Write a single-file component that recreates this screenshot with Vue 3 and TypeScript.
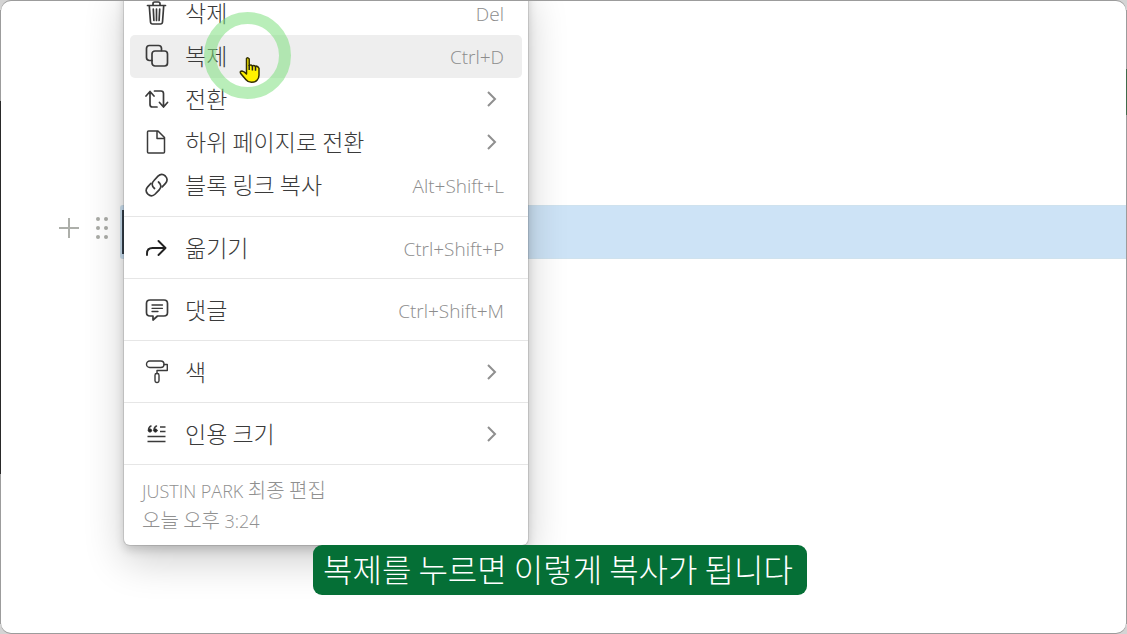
<script setup lang="ts">
type IconName = 'trash' | 'copy' | 'turn' | 'page' | 'link' | 'move' | 'comment' | 'color' | 'quote'

interface MenuItem {
  icon: IconName
  label: string
  shortcut?: string
  active?: boolean
}

const groups: MenuItem[][] = [
  [
    { icon: 'trash', label: '삭제', shortcut: 'Del' },
    { icon: 'copy', label: '복제', shortcut: 'Ctrl+D', active: true },
    { icon: 'turn', label: '전환' },
    { icon: 'page', label: '하위 페이지로 전환' },
    { icon: 'link', label: '블록 링크 복사', shortcut: 'Alt+Shift+L' },
  ],
  [{ icon: 'move', label: '옮기기', shortcut: 'Ctrl+Shift+P' }],
  [{ icon: 'comment', label: '댓글', shortcut: 'Ctrl+Shift+M' }],
  [{ icon: 'color', label: '색' }],
  [{ icon: 'quote', label: '인용 크기' }],
]
</script>

<template>
  <div class="desktop">
    <main class="window">
      <div class="block-row">
        <div class="controls">
          <button class="tool" type="button" aria-label="블록 추가">
            <svg width="22" height="22" viewBox="0 0 22 22"><path d="M11 1v20M1 11h20" stroke="#adafaa" stroke-width="2" /></svg>
          </button>
          <button class="tool" type="button" aria-label="블록 메뉴">
            <svg width="16" height="24" viewBox="0 0 16 24" fill="#a9aba6">
              <circle cx="4" cy="3" r="2" /><circle cx="12" cy="3" r="2" />
              <circle cx="4" cy="12" r="2" /><circle cx="12" cy="12" r="2" />
              <circle cx="4" cy="21" r="2" /><circle cx="12" cy="21" r="2" />
            </svg>
          </button>
        </div>
        <div class="block"></div>
      </div>

      <nav class="menu">
        <ul v-for="(group, g) in groups" :key="g" class="group">
          <li v-for="item in group" :key="item.label">
            <button class="item" :class="{ active: item.active }" type="button">
              <svg class="icon" viewBox="0 0 24 24" fill="none" stroke="#3a3a3a" stroke-width="1.7" stroke-linecap="round" stroke-linejoin="round">
                <template v-if="item.icon === 'trash'">
                  <path d="M2.5 4.5h18M8 4V2.7Q8 1 9.7 1h3.6Q15 1 15 2.7V4M4.3 5l1.2 16q.2 2 2 2h8q1.800 0 2-2L18.700 5M8.300 8l.6 11.500M11.500 8v11.500M14.700 8l-.6 11.500" />
                </template>
                <template v-else-if="item.icon === 'copy'">
                  <rect x="7" y="7" width="15.500" height="15" rx="3" />
                  <path d="M7 16.500H4.500q-3 0-3-3V4.500q0-3 3-3h9q3 0 3 3V6.500" />
                </template>
                <template v-else-if="item.icon === 'turn'">
                  <path d="M1 9l4-4.500L9 9M5 5v12.500q0 2.500 2.500 2.500H12M9.500 4H16q2.500 0 2.500 2.500V19M14.500 15.500l4 4.500 4-4.500" />
                </template>
                <template v-else-if="item.icon === 'page'">
                  <path d="M3.500 1H13l6.500 6.500V22q0 1-1 1h-15q-1 0-1-1V2q0-1 1-1zM12 1.500V8.500h7" stroke-width="1.500" />
                </template>
                <template v-else-if="item.icon === 'link'">
                  <path d="M9.500 15.500C6.500 13 6.500 10 9 7.500l4-4.300c2.500-2.500 5.300-2 7.300-.2 2.200 2.100 2.400 5 .2 7.300l-3.300 3.600" />
                  <path d="M13.500 9c3 2.500 3 5.300.7 7.800l-4 4.200c-2.500 2.500-5.300 2-7.300.2-2.200-2.100-2.400-5-.2-7.300L6 10.300" />
                </template>
                <template v-else-if="item.icon === 'move'">
                  <path d="M2 19v-1.500Q2 12 7.500 12H20M13.500 5l7 7-7 7" stroke="#222" stroke-width="1.900" />
                </template>
                <template v-else-if="item.icon === 'comment'">
                  <path d="M5 2h14q3.500 0 3.500 3.500v9q0 3.500-3.500 3.500h-6.500L8 22v-4H5q-3.500 0-3.500-3.500v-9Q1.500 2 5 2z" />
                  <path d="M7 7h10.500M7 10.300h10.500M7 13.500h6" stroke-width="1.300" />
                </template>
                <template v-else-if="item.icon === 'color'">
                  <rect x="1.500" y="1" width="17.500" height="6.500" rx="3.200" stroke-width="1.400" />
                  <path d="M19 4.500h3.300v6H12v3" stroke-width="1.400" />
                  <rect x="10" y="13.500" width="4" height="9" rx="1.700" stroke-width="1.400" />
                </template>
                <template v-else>
                  <path d="M2.500 14.500h18M2.500 19.500h18M15 5h5.500M15 9.500h5.500" stroke-width="1.500" stroke-linecap="butt" />
                  <path d="M6 4Q3.500 5 3.500 8.500M11.500 4Q9 5 9 8.500" stroke-width="1.500" />
                  <circle cx="5" cy="8.500" r="1.700" fill="#222" stroke-width=".8" />
                  <circle cx="10.500" cy="8.500" r="1.700" fill="#222" stroke-width=".8" />
                </template>
              </svg>
              <span class="label">{{ item.label }}</span>
              <span v-if="item.shortcut" class="shortcut">{{ item.shortcut }}</span>
              <svg v-else class="chevron" viewBox="0 0 12 18"><path d="M2 2l7 7-7 7" fill="none" stroke="#8f8f8f" stroke-width="2" /></svg>
            </button>
          </li>
        </ul>
        <p class="edited"><span class="latin">JUSTIN PARK</span> 최종 편집<br />오늘 오후 <span class="latin">3:24</span></p>
      </nav>

      <div class="ring"></div>
      <svg class="pointer" width="22" height="28" viewBox="0 0 22 28">
        <path d="M7.500 2.500Q9 1 10.200 3v6.500q1.800-1.200 3 .3 1.800-1 3 .5 2.500-.8 3.800 2v7q0 3-2 5-1.500 2-5.500 2-3.500 0-5.500-2.500L1.700 17.500q-1.200-2.500 1.300-2.500 2 .2 4.500 3z" fill="#fff100" stroke="#333000" stroke-width="1.500" stroke-linejoin="round" />
        <path d="M10.200 9v5M13.400 10v4.500M16.500 10.800v4" stroke="#222" stroke-width="1.500" />
      </svg>
      <p class="caption">복제를 누르면 이렇게 복사가 됩니다</p>
    </main>
  </div>
</template>

<style>
body {
  margin: 0;
}
</style>

<style scoped>
* {
  box-sizing: border-box;
}
.desktop {
  display: grid;
  min-height: 100vh;
  padding: 1px;
  background:
    linear-gradient(#292929, #292929) 0 101px / 1px 373px no-repeat,
    linear-gradient(#416a4b, #416a4b) 100% 69px / 1px 46px no-repeat,
    linear-gradient(#9c9c9c, #9c9c9c) 50% 50% / 100% calc(100% - 20px) no-repeat,
    #d4d4d4;
  font-family: "Noto Sans CJK KR", sans-serif;
  font-weight: 300;
}
.window {
  position: relative;
  overflow: hidden;
  padding-top: 204px;
  border-radius: 10px;
  background: #fff;
  box-shadow: 0 -1px 0 #9c9c9c, 0 1px 0 #9c9c9c;
}
.block-row {
  display: flex;
  align-items: stretch;
}
.controls {
  display: flex;
  justify-content: flex-end;
  align-items: center;
  gap: 14px;
  width: 119px;
  padding: 0 10px 8px 0;
}
.tool {
  display: flex;
  padding: 0;
  border: 0;
  background: none;
}
.block {
  flex: 1;
  height: 54px;
  border: 1px solid #cfe2ee;
  border-right: 0;
  border-radius: 3px 0 0 3px;
  background: linear-gradient(#35414b, #35414b) 1px 4px / 2px 44px no-repeat, #cde3f6;
}
.menu {
  position: absolute;
  top: -16px;
  left: 123px;
  width: 404px;
  padding-top: 7px;
  border-radius: 6px;
  background: #fff;
  box-shadow: 0 0 0 1px rgba(0, 0, 0, 0.1), 0 5px 10px rgba(0, 0, 0, 0.16), 0 15px 40px rgba(0, 0, 0, 0.2);
}
.group {
  margin: 0;
  padding: 9px 6px;
  border-bottom: 1px solid #e6e6e6;
  list-style: none;
}
.group:first-child {
  padding-top: 0;
}
.item {
  display: flex;
  align-items: center;
  width: 100%;
  height: 43px;
  padding: 0 18px 0 15px;
  border: 0;
  border-radius: 5px;
  background: none;
  color: #3a3a3a;
  font: inherit;
  font-size: 23px;
  line-height: 24px;
  text-align: left;
}
.group:first-child .item {
  padding-bottom: 2px;
}
.active {
  background: #eee;
}
.icon {
  width: 24px;
  height: 24px;
  margin-right: 16px;
}
.label {
  flex: 1;
  padding-bottom: 2px;
}
.shortcut {
  padding-top: 2px;
  color: #8c8c8c;
  font-family: "Open Sans", sans-serif;
  font-size: 19px;
}
.chevron {
  width: 12px;
  height: 18px;
  margin-right: 6px;
}
.edited {
  margin: 0;
  padding: 10px 18px;
  color: #909090;
  font-size: 20px;
  line-height: 30px;
}
.latin {
  font-family: "Open Sans", sans-serif;
  font-size: 18px;
  line-height: 24px;
}
.ring {
  position: absolute;
  top: 11px;
  left: 203px;
  width: 87px;
  height: 87px;
  border: 12px solid rgba(128, 224, 128, 0.55);
  border-radius: 50%;
}
.pointer {
  position: absolute;
  top: 55px;
  left: 238px;
}
.caption {
  position: absolute;
  top: 544px;
  left: 312px;
  margin: 0;
  padding: 0 14px 4px 10px;
  border-radius: 9px;
  background: #056f36;
  color: #fff;
  font-size: 32px;
  line-height: 46px;
  white-space: nowrap;
}
</style>
